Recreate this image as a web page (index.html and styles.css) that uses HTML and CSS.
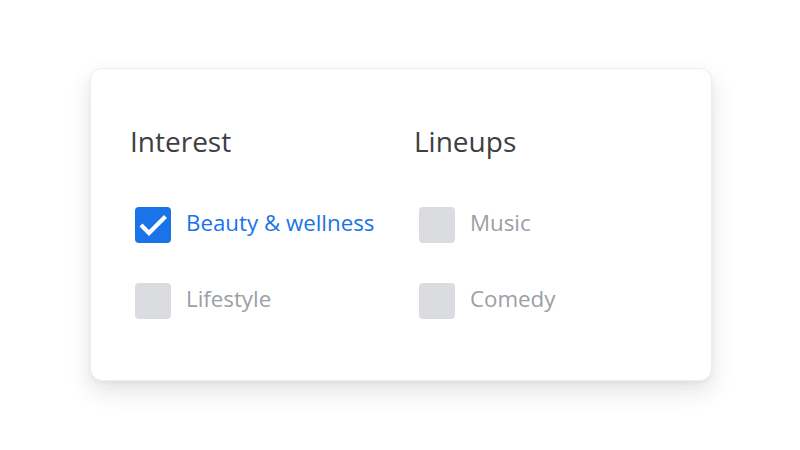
FILE: index.html
```html
<!DOCTYPE html>
<html>
<head>
<meta charset="utf-8">
<link rel="stylesheet" href="styles.css">
</head>
<body>
<div class="stage">
  <div class="card">
    <div class="col col-interest">
      <h2 class="title">Interest</h2>
      <div class="opt checked">
        <span class="box"><svg viewBox="0 0 36 36" width="36" height="36"><path d="M7.5 19.5 L14 26 L29 11" fill="none" stroke="#fff" stroke-width="4.2" stroke-linecap="square" stroke-linejoin="miter"/></svg></span>
        <span class="label">Beauty &amp; wellness</span>
      </div>
      <div class="opt">
        <span class="box"></span>
        <span class="label">Lifestyle</span>
      </div>
    </div>
    <div class="col">
      <h2 class="title">Lineups</h2>
      <div class="opt">
        <span class="box"></span>
        <span class="label">Music</span>
      </div>
      <div class="opt">
        <span class="box"></span>
        <span class="label">Comedy</span>
      </div>
    </div>
  </div>
</div>
</body>
</html>
```
FILE: styles.css
```css
html, body {
  margin: 0;
  padding: 0;
  background: #ffffff;
}
body {
  width: 800px;
  height: 450px;
  font-family: "Open Sans", Roboto, sans-serif;
}
.stage {
  padding: 68px 0 0 90px;
}
.card {
  box-sizing: border-box;
  width: 622px;
  height: 313px;
  background: #fff;
  border: 1px solid #eeeeee;
  border-radius: 12px;
  box-shadow: 0 10px 22px rgba(60, 64, 67, 0.15), 0 2px 4px rgba(60,64,67,0.05);
  display: flex;
  padding: 56px 0 0 39px;
}
.col {
  display: flex;
  flex-direction: column;
}
.col-interest {
  width: 284px;
}
.title {
  margin: 0 0 50px 0;
  font-size: 28px;
  line-height: 32px;
  font-weight: 400;
  color: #3c4043;
}
.opt {
  display: flex;
  align-items: center;
  height: 36px;
  margin-bottom: 40px;
  padding-left: 5px;
}
.box {
  width: 36px;
  height: 36px;
  border-radius: 4px;
  background: #dadce0;
  flex: none;
  display: flex;
}
.checked .box {
  background: #1a73e8;
}
.label {
  margin-left: 15px;
  font-size: 22.3px;
  line-height: 30px;
  padding-bottom: 5px;
  color: #9aa0a6;
}
.checked .label {
  color: #1a73e8;
}
```
